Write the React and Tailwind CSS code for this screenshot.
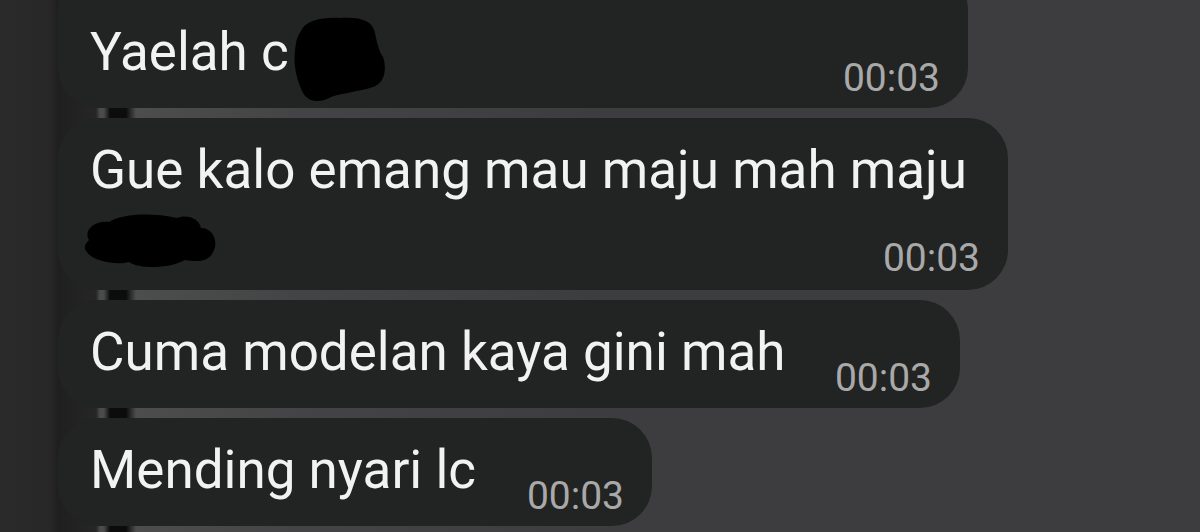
import React from "react";

const messages = [
  { id: 1, text: "Yaelah c", time: "00:03", width: "w-[910px]", redactInline: true },
  { id: 2, text: "Gue kalo emang mau maju mah maju", time: "00:03", width: "w-[950px]", redactLine: true },
  { id: 3, text: "Cuma modelan kaya gini mah", time: "00:03", width: "w-[902px]" },
  { id: 4, text: "Mending nyari lc", time: "00:03", width: "w-[594px]" },
];

const InlineBlob = () => (
  <svg
    viewBox="0 0 95 86"
    className="absolute left-[232px] top-[47px] w-[97px] h-[86px]"
  >
    <path
      d="M10 14 C14 4 30 0 50 1 C70 0 82 4 84 16 C86 26 88 34 92 40 C96 52 94 66 82 70 C70 74 52 76 40 80 C30 86 18 86 12 76 C6 64 2 48 4 34 C5 24 6 20 10 14 Z"
      fill="#000"
    />
  </svg>
);

const LineBlob = () => (
  <svg viewBox="0 0 136 56" className="w-[136px] h-[56px] -ml-[9px] mb-[10px] mt-[12px]">
    <path
      d="M8 28 C2 18 14 8 28 10 C40 2 70 0 96 6 C106 2 118 6 120 16 C132 16 138 30 132 40 C128 50 116 50 104 48 C90 56 60 58 48 50 C34 54 10 48 6 40 C2 36 4 32 8 28 Z"
      fill="#000"
    />
  </svg>
);

const Time = ({ children }) => (
  <span className="text-[39px] leading-[39px] text-[#a9a9a9] whitespace-nowrap">
    {children}
  </span>
);

const Bubble = ({ msg, first }) => {
  const base = `relative ${msg.width} rounded-[40px] bg-[#222323] pl-[32px] pr-[28px]`;

  if (msg.redactLine) {
    return (
      <div className={`${base} pt-[22px] pb-[12px]`}>
        <p className="text-[53px] leading-[60px] text-[#f2f2f2] whitespace-nowrap">{msg.text}</p>
        <div className="flex items-end justify-between">
          <LineBlob />
          <Time>{msg.time}</Time>
        </div>
      </div>
    );
  }

  return (
    <div className={`${base} ${first ? "-mt-[30px] pt-[52px]" : "pt-[22px]"} pb-[10px]`}>
      <div className="flex items-end justify-between">
        <p className="text-[53px] leading-[60px] text-[#f2f2f2] whitespace-nowrap mb-[16px]">
          {msg.text}
        </p>
        <Time>{msg.time}</Time>
      </div>
      {msg.redactInline && <InlineBlob />}
    </div>
  );
};

export default function App() {
  return (
    <div className="w-[1200px] h-[532px] overflow-hidden font-['Roboto',sans-serif] bg-[linear-gradient(to_right,#2a2a2a_0,#282828_50px,#1f1f1f_58px,#262626_96px,#4c4c4c_100px,#4a4a4a_104px,#0c0c0c_110px,#0c0c0c_126px,#4d4d4d_136px,#444446_300px,#3d3d3f_600px)]">
      <div className="flex flex-col items-start gap-[10px] pl-[58px]">
        {messages.map((msg, i) => (
          <Bubble key={msg.id} msg={msg} first={i === 0} />
        ))}
      </div>
    </div>
  );
}
